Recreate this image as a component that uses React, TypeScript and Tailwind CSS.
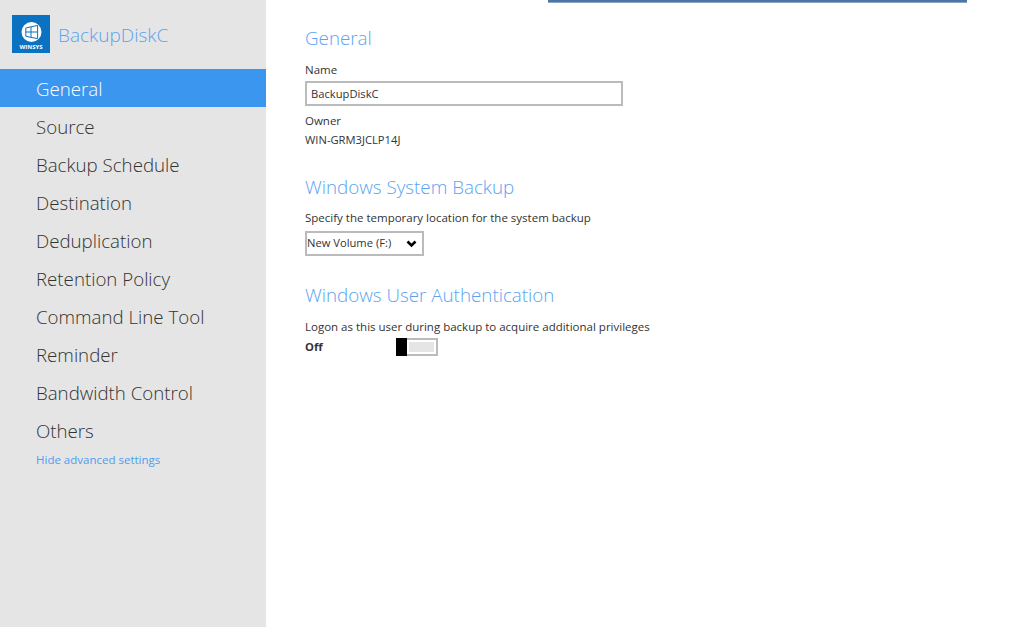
import React from 'react';

const navItems = [
  'General',
  'Source',
  'Backup Schedule',
  'Destination',
  'Deduplication',
  'Retention Policy',
  'Command Line Tool',
  'Reminder',
  'Bandwidth Control',
  'Others',
];

function WinsysLogo() {
  return (
    <div className="w-[38px] h-[38px] bg-[#0a72c0] flex flex-col items-center pt-[7px] shrink-0">
      <svg width="21" height="20" viewBox="0 0 21 20">
        <circle cx="10.5" cy="10" r="10" fill="#ffffff" />
        <path d="M4.8 6 L10 4.8 V15.4 L4.8 14.2 Z M10 4.8 L16.6 3.4 V16.6 L10 15.4 M4.8 10 H16.6" fill="none" stroke="#0a72c0" strokeWidth="1" />
      </svg>
      <span className="text-[6px] leading-[8px] font-bold text-white mt-[1px]">WINSYS</span>
    </div>
  );
}

export default function App() {
  return (
    <div className="relative flex w-[1024px] h-[627px] overflow-hidden bg-white font-['Open_Sans',sans-serif] text-[#333333]">
      {/* dialog edge peeking in from the top */}
      <div className="absolute top-0 left-[548px] w-[419px] h-[3px] bg-[#4a76ac] border-b border-[#8fa3bd]" />

      <aside className="w-[266px] shrink-0 bg-[#e5e5e5]">
        <div className="h-[69px] flex items-start gap-2 pl-3 pt-[15px]">
          <WinsysLogo />
          <span className="text-[19px] leading-[40px] font-light text-[#5ba3f2]">BackupDiskC</span>
        </div>
        <nav>
          {navItems.map((item, idx) => (
            <div
              key={item}
              className={
                idx === 0
                  ? 'h-[38px] pl-9 text-[18.7px] leading-[40px] font-light bg-[#3b96f0] text-white'
                  : 'h-[38px] pl-9 text-[18.7px] leading-[40px] font-light text-[#333333]'
              }
            >
              {item}
            </div>
          ))}
        </nav>
        <div className="pl-9 pt-[3px] text-[11.5px] leading-[16px] text-[#4f9cf0]">Hide advanced settings</div>
      </aside>

      <main className="flex-1 pl-[39px] pt-[25px]">
        <h2 className="text-[18.8px] leading-[27px] font-light text-[#5ba3f2]">General</h2>
        <div className="mt-[10px] text-[11.5px] leading-[16px]">Name</div>
        <div className="mt-[3px] w-[318px] h-[25px] border-2 border-[#bbbbbb] px-[4px] text-[11.2px] leading-[21px]">BackupDiskC</div>
        <div className="mt-[7px] text-[11.5px] leading-[16px]">Owner</div>
        <div className="mt-[3px] text-[11.2px] leading-[16px]">WIN-GRM3JCLP14J</div>

        <h2 className="mt-[26px] text-[18.8px] leading-[27px] font-light text-[#5ba3f2]">Windows System Backup</h2>
        <div className="mt-[9px] text-[11.5px] leading-[16px]">Specify the temporary location for the system backup</div>
        <div className="mt-[5px] w-[119px] h-[25px] border-2 border-[#bbbbbb] pl-0 pr-[5px] flex items-center justify-between text-[11.2px]">
          <span>New Volume (F:)</span>
          <svg width="11" height="8" viewBox="0 0 11 8">
            <path d="M1.5 1.5 L5.5 5.5 L9.5 1.5" fill="none" stroke="#000000" strokeWidth="2.6" />
          </svg>
        </div>

        <h2 className="mt-[26px] text-[18.8px] leading-[27px] font-light text-[#5ba3f2]">Windows User Authentication</h2>
        <div className="mt-[10px] text-[11.5px] leading-[16px]">Logon as this user during backup to acquire additional privileges</div>
        <div className="mt-[3px] flex items-center">
          <span className="w-[91px] text-[11.2px] font-bold">Off</span>
          <div className="flex w-[42px] h-[18px] border-2 border-[#bbbbbb] border-l-0">
            <div className="w-[11px] h-[18px] -mt-[2px] bg-black" />
            <div className="flex-1 m-[2px] bg-[#e5e5e5]" />
          </div>
        </div>
      </main>
    </div>
  );
}
